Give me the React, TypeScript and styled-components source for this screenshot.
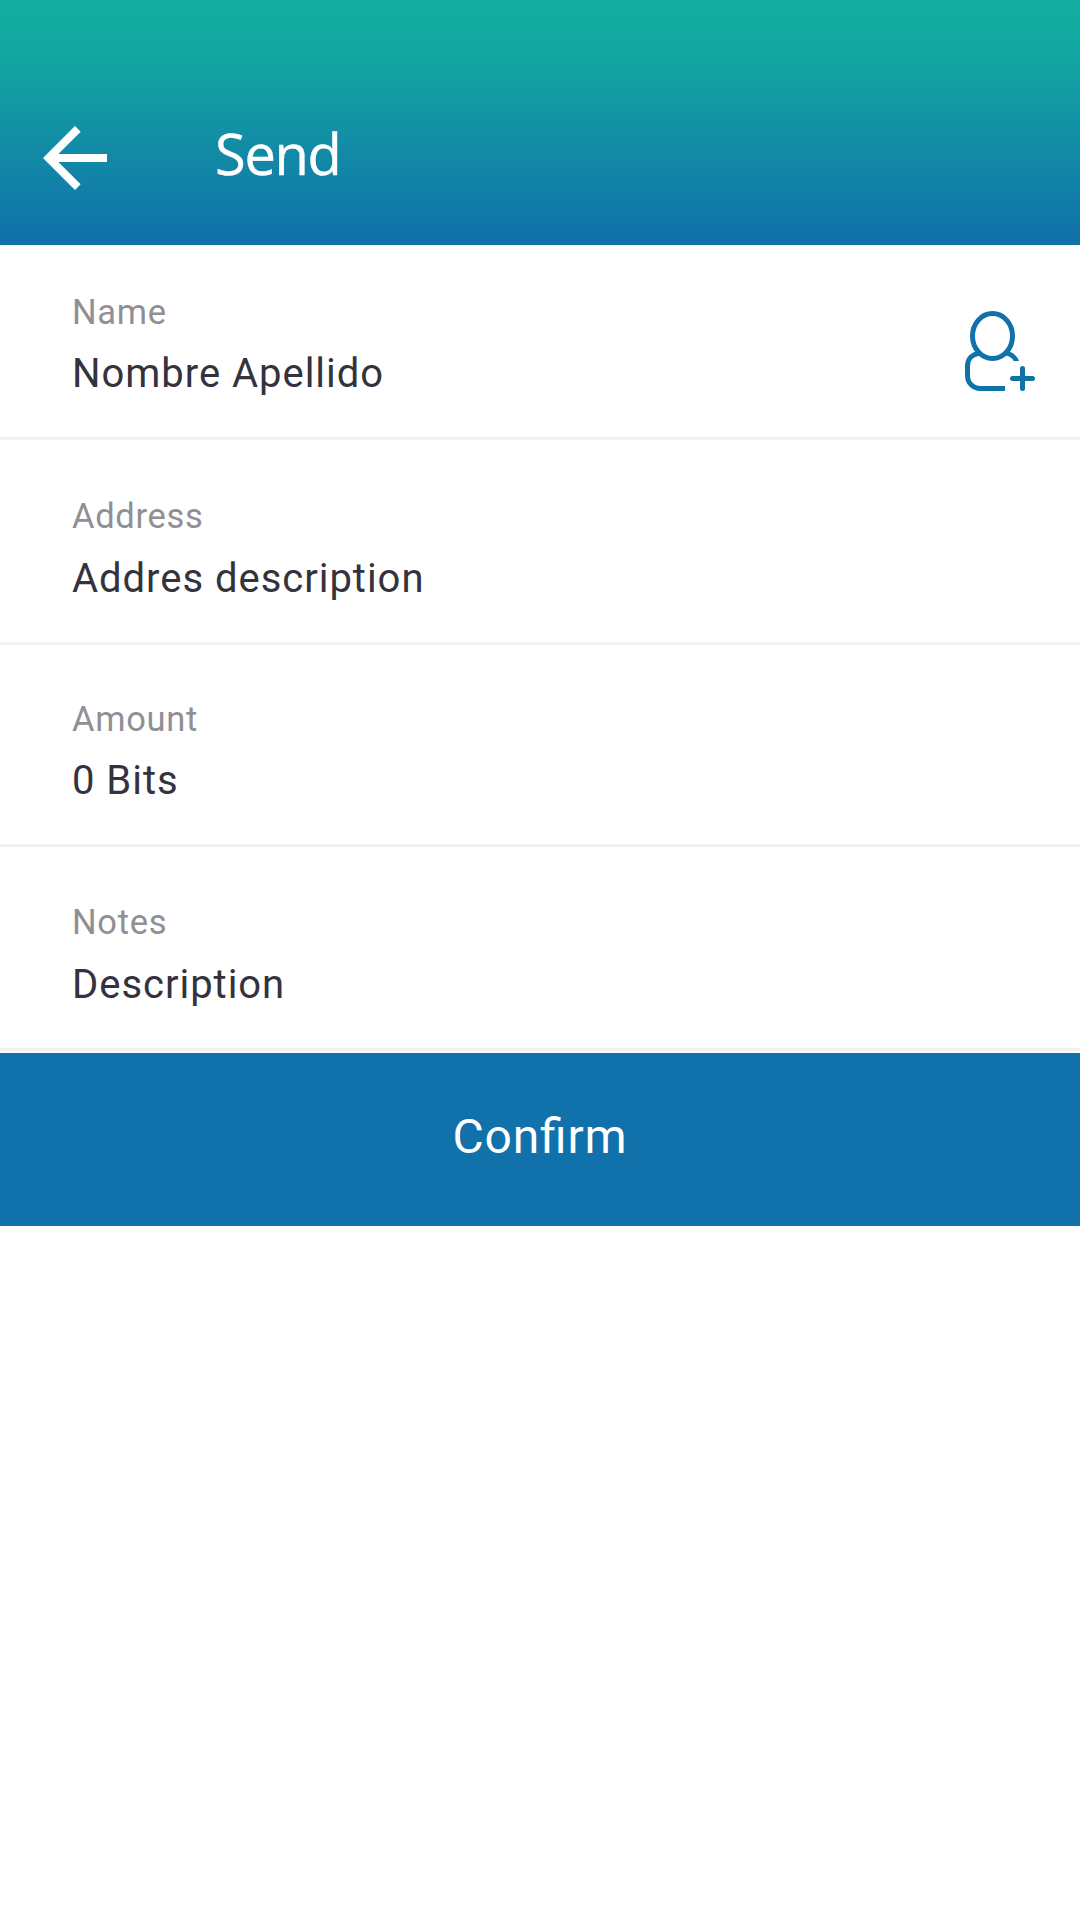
import React from "react";
import styled, { createGlobalStyle } from "styled-components";

const BLUE = "#1171aa";

const GlobalStyle = createGlobalStyle`
  *, *::before, *::after { box-sizing: border-box; }
  body { margin: 0; background: #fff; }
  button { appearance: none; border: 0; padding: 0; background: none; color: inherit; font: inherit; }
`;

const Screen = styled.div`
  display: flex;
  flex-direction: column;
  width: 1080px;
  min-height: 1920px;
  background: #fff;
  font-family: Roboto, "Liberation Sans", sans-serif;
`;

const Header = styled.header`
  display: flex;
  align-items: flex-start;
  height: 245px;
  padding: 110px 27px 0;
  background: linear-gradient(#13afa0 0%, #13a8a2 20%, #1171aa 98%);
  color: #fff;
`;

const BackButton = styled.button`
  width: 96px;
  height: 96px;
  margin-right: 92px;

  svg { display: block; }
`;

const Title = styled.h1`
  margin: 3px 0 0;
  font: 400 56px/80px "Open Sans", "Noto Sans", sans-serif;
  letter-spacing: -1.3px;
  -webkit-text-stroke: 0.4px #fff;
`;

const Field = styled.section<{ $height: number; $top: number }>`
  display: flex;
  justify-content: space-between;
  height: ${(p) => p.$height}px;
  padding: ${(p) => p.$top}px 45px 0 72px;
  border-bottom: 3px solid #f1f1f2;
`;

const Texts = styled.div<{ $gap: number }>`
  display: flex;
  flex-direction: column;
  gap: ${(p) => p.$gap}px;
`;

const Label = styled.span`
  color: #8f8f94;
  font-size: 34.5px;
  line-height: 40px;
  letter-spacing: 0.7px;
`;

const Value = styled.span`
  color: #34333d;
  font-size: 40px;
  line-height: 48px;
  letter-spacing: 0.97px;
`;

const ContactButton = styled.button`
  width: 70px;
  height: 80px;
  margin-top: 19px;

  svg { display: block; }
`;

const Confirm = styled.button`
  height: 173px;
  margin-top: 2px;
  padding-bottom: 6px;
  background: ${BLUE};
  color: #fff;
  font-size: 48px;
  line-height: 56px;
  letter-spacing: 0.8px;
  font-feature-settings: "liga" 1;
`;

const fields = [
  { label: "Name", value: "Nombre Apellido", height: 195, top: 47, gap: 18, contact: true },
  { label: "Address", value: "Addres description", height: 205, top: 56, gap: 19 },
  { label: "Amount", value: "0 Bits", height: 202, top: 54, gap: 18 },
  { label: "Notes", value: "Description", height: 204, top: 55, gap: 19 },
];

const BackIcon = () => (
  <svg width="96" height="96" viewBox="0 0 24 24" fill="currentColor">
    <path d="M20 11H7.83l5.59-5.59L12 4l-8 8 8 8 1.41-1.41L7.83 13H20v-2z" />
  </svg>
);

const AddContactIcon = () => (
  <svg width="70" height="80" viewBox="0 0 70 80" fill="none" stroke={BLUE} strokeWidth="5">
    <ellipse cx="27.5" cy="25" rx="20" ry="22.5" />
    <path d="M14 42.3C7 43.3 2.5 48.3 2.5 55v9.5C2.5 72 8 77.5 15.5 77.5H40" />
    <path d="M42.5 40C47.5 41 52 44.5 54 50H48.800C47 46.800 44 45 40 44.500Z" fill={BLUE} stroke="none" />
    <path d="M57.5 57.5v20M47.5 67.5h20" strokeLinecap="round" />
  </svg>
);

export default function App() {
  return (
    <>
      <GlobalStyle />
      <Screen>
        <Header>
          <BackButton aria-label="Back"><BackIcon /></BackButton>
          <Title>Send</Title>
        </Header>
        {fields.map((f) => (
          <Field key={f.label} $height={f.height} $top={f.top}>
            <Texts $gap={f.gap}>
              <Label>{f.label}</Label>
              <Value>{f.value}</Value>
            </Texts>
            {f.contact && <ContactButton aria-label="Add contact"><AddContactIcon /></ContactButton>}
          </Field>
        ))}
        <Confirm>Confirm</Confirm>
      </Screen>
    </>
  );
}
